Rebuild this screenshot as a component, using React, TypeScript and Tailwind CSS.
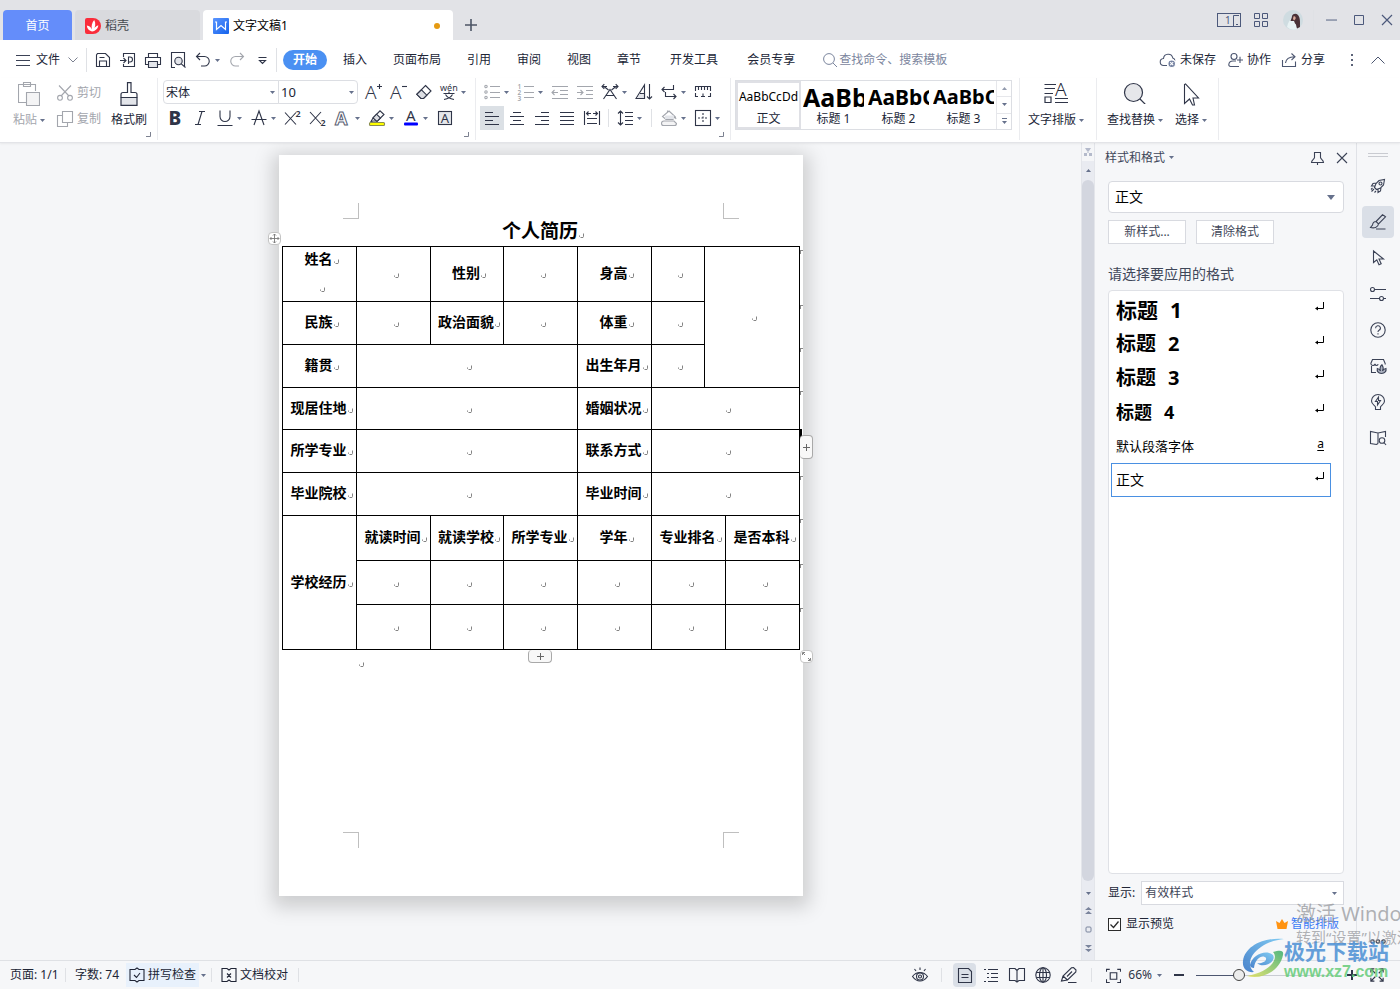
import React, { type ReactNode } from "react";

const inkA = { fontFamily: "Noto Sans", stroke: "none", fill: "currentColor" } as const;

const glyphs: Record<string, ReactNode> = {
  save: <><path d="M1.5 3V14.5H14.5V5.5L10.5 1.5H2.5L1.5 3Z" /><path d="M4.5 14.5V9H11.5V14.5M4.5 5.5H9.5" /></>,
  export: <><path d="M3.5 5V1.5H14.5V14.5H3.5V12M0 8.5H6M3.5 6L6 8.5L3.5 11" /><path d="M8.5 12V5H10a2.4 2.4 0 0 1 0 5H8.5" /></>,
  print: <><path d="M3.5 5.5V1.5H12.5V5.5M3.5 12.5H.5V5.5H15.5V12.5H12.5" /><path d="M3.5 9.5H12.5V15.5H3.5Z" fill="#e3e5ea" /></>,
  preview: <><path d="M5 15.5H1.5V.5H14.5V14" /><circle cx="8.5" cy="9" r="3.7" fill="#e3e5ea" /><path d="M11.3 11.8L15.5 15.5" /></>,
  undo: <path d="M5 1L1.5 4.5L5 8M1.5 4.5H9.5a4.5 4.5 0 0 1 0 9.5H6" />,
  redo: <path d="M11 1L14.5 4.5L11 8M14.5 4.5H6.5a4.5 4.5 0 0 0 0 9.5H10" />,
  more: <path d="M4.500 5.500H12.500M5.500 8.500H11.500L8.500 11.500Z" />,
  cut: <><path d="M2 0.5L12 11M14 .5L4 11" /><circle cx="3" cy="12.8" r="2.4" /><circle cx="13" cy="12.8" r="2.4" /></>,
  copy: <><path d="M5.5.5H15.5V11.5H5.5Z" fill="#fff" /><path d="M5 4.5H.5V15.5H10.5V12" /></>,
  grow: <><text x="-1" y="15" fontSize="19" fontWeight="300" style={inkA}>A</text><path d="M11 2.500H16M13.500 0V5" /></>,
  shrink: <><text x="-1" y="15" fontSize="19" fontWeight="300" style={inkA}>A</text><path d="M11 2.500H16" /></>,
  eraser: <><path d="M9.5 1.5L15 7L7.5 14.5H5L.8 10.3Z" /><path d="M5.5 5.8L10.8 11.2L7.5 14.5H5L.8 10.3Z" fill="#dcdee3" /></>,
  pinyin: <><text x="-1" y="6.500" fontSize="9" style={inkA}>wén</text><path d="M2.500 9.500H13.500M8 7.500V9.500M4.500 10.500C6.500 14 9.500 15 13 15.500M11.500 10.500C9.500 14 6.500 15 3 15.500" /></>,
  bold: <text x="1.5" y="15" fontSize="19" fontWeight="800" style={inkA}>B</text>,
  italic: <path d="M7 1.5H13M3 14.5H9M10 1.5L6 14.5" />,
  underline: <path d="M3 .5V6.5a5 5 0 0 0 10 0V.5M.5 15.5H15.5" />,
  strike: <path d="M3 15L8 1L13 15M.5 9.5H15.5" />,
  sup: <><path d="M0 2.500L11 14.500M11 2.500L0 14.500" /><text x="10.5" y="7" fontSize="9" fontWeight="600" style={inkA}>2</text></>,
  sub: <><path d="M0 2L11 14M11 2L0 14" /><text x="10.5" y="16" fontSize="9" fontWeight="600" style={inkA}>2</text></>,
  effect: <text x="0" y="14.5" fontSize="18" fontWeight="700" style={{ fontFamily: "Noto Sans", fill: "#fff", stroke: "#596073", strokeWidth: 1 }}>A</text>,
  highlight: <><path d="M4 8L11 .8L15 4.5L8.5 11H4.5L2 11.5Z" fill="#fff" /><path d="M4 8L8 11.5L11.5 8L7.5 4.2Z" fill="#dcdee3" /><rect x=".5" y="12.5" width="15" height="3" rx="1" fill="#ffff00" stroke="#8a8d50" /></>,
  color: <><text x="3" y="11" fontSize="15" style={inkA}>A</text><rect x="1" y="12.5" width="14" height="3" rx="1" fill="#0000ff" stroke="none" /></>,
  shade: <><rect x="1.5" y="1.5" width="13" height="13" fill="#e6e8ec" /><text x="3.7" y="12.5" fontSize="13" style={inkA}>A</text></>,
  bullets: <><circle cx="2" cy="2.5" r="1.2" /><circle cx="2" cy="8" r="1.2" /><circle cx="2" cy="13.5" r="1.2" /><path d="M6 2.5H16M6 8.5H16M6 13.5H16" /></>,
  numbers: <><text x="-.5" y="4.5" fontSize="6.5" fontWeight="600" style={inkA}>1</text><text x="-.5" y="10.5" fontSize="6.5" fontWeight="600" style={inkA}>2</text><text x="-.5" y="16.5" fontSize="6.5" fontWeight="600" style={inkA}>3</text><path d="M6 2.5H16M6 8.5H16M6 13.5H16" /></>,
  outdent: <path d="M0 2.5H16M8 6.5H16M8 10.5H16M0 14.5H16M0 8.5H6M2.5 6L0 8.5L2.5 11" />,
  indent: <path d="M0 2.5H16M9 6.5H16M9 10.5H16M0 14.5H16M0 8.5H6M3.5 6L6 8.5L3.5 11" />,
  scale: <path d="M1.500 15L8 5.500L14.500 15M4 11.500H12M6.500 6L2 2.500M9.500 6L14 2.500M0 2.500H5M2.300 .200L0 2.500L2.300 4.800M16 2.500H11M13.700 .200L16 2.500L13.700 4.800" />,
  sort: <><path d="M0 14.5L8.5 1V14.5Z" /><path d="M4 9.5H8.5V14.5H1" fill="#e3e5ea" /><path d="M13.5 0V15M11 12.5L13.5 15L16 12.5" /></>,
  tabs: <path d="M12.5 1V5.5H1M3.5 3L1 5.5L3.5 8M4.5 8V12.5H15M12.5 10L15 12.5L12.5 15" />,
  ruler: <path d="M.5 7V2.5H15.5V7M3.500 3V6M6.500 3V6M9.500 3V6M12.500 3V6M.5 9V12.5H3M6 12.5H10M8 9.5V12.5M13 12.5H15.5V9" />,
  left: <path d="M1 2.5H9M1 6.5H15M1 10.5H9M1 14.5H15" />,
  center: <path d="M4 2.5H12M1 6.5H15M4 10.5H12M1 14.5H15" />,
  right: <path d="M7 2.5H15M1 6.5H15M7 10.5H15M1 14.5H15" />,
  justify: <path d="M1 2.5H15M1 6.5H15M1 10.5H15M1 14.5H15" />,
  distribute: <path d="M.5 1V15M15.5 1V15M3 8.5H13M3 13.5H13M3 3.5H7M9 3.5H13M4.5 1.5L2.5 3.5L4.5 5.5M11.5 1.5L13.5 3.5L11.5 5.5" />,
  spacing: <path d="M3.5 1V15M1 3.5L3.5 1L6 3.5M1 12.5L3.5 15L6 12.5M8 2.5H16M8 6.5H16M8 10.5H16M8 14.5H16" />,
  bucket: <><path d="M8 1L14 6.5L12 9.500H5L1.500 6.5ZM6.500 2.500V.500M14 6.500L15 9" /><path d="M4 5.500H13V9H4Z" fill="#e3e5ea" stroke="none" /><path d="M3 11H13L15.500 13.500Q15.500 15.500 13.500 15.500H2.500Q.500 15.500 .500 13.500Q.500 11 3 11Z" fill="#f4f4f5" /></>,
  borders: <><rect x=".5" y=".5" width="15" height="15" /><path d="M8 3V13M3 8H13" strokeDasharray="2 1.5" /></>,
  cloud: <><path d="M7 13.5H4a3.5 3.5 0 0 1-.5-7A4.7 4.7 0 0 1 12.8 6A3.5 3.5 0 0 1 15 8.5" /><circle cx="11.7" cy="11.7" r="3.8" fill="#7380a0" stroke="#fff" /><path d="M10.2 10.2L13.2 13.2M13.2 10.2L10.2 13.2" stroke="#fff" /></>,
  collab: <><circle cx="6" cy="4.5" r="3" /><path d="M11 14.5H2.5A1.8 1.8 0 0 1 .8 12.5C1 10.5 2.5 9 5 9H8M12 4.8V11M9 8H15" /></>,
  share: <path d="M.5 8V14.5H13.5V9.5M3.5 11C4 7 6.5 5 12.5 4.8M9.5 1.5L13 4.8L9.5 8" />,
  rocket: <><path d="M4.5 9.5L6 5.5L9 2.5L14.5 1.5L13.5 7L10.5 10L6.5 11.5ZM6.5 5L3 5.5L1.5 8H4.5M11 9.5L10.5 13L8 14.5V11M4 11L1.5 13.5M2.5 10L1 11.5M6 13L4.5 14.5" /><circle cx="10.5" cy="5.5" r="1.5" /></>,
  brush: <path d="M14.500 2L12.500 .800L6 7.500L8.500 10L15.500 2.800ZM6 7.500C3.500 7.500 2.800 9 2.500 11L.500 13.500C4 14.500 8 13.500 8.500 10M6 15H15.500" />,
  pointer: <path d="M3.5 1V12.5L6.8 9.8L9 14.8L11.2 13.8L9 9H13.5Z" />,
  sliders: <><circle cx="2.5" cy="3.5" r="2" /><path d="M4.5 3.5H16M0 12.5H9.5M13.5 12.5H16" /><circle cx="11.5" cy="12.5" r="2" /></>,
  help: <><circle cx="8" cy="8" r="7.2" /><path d="M5.6 6.2a2.4 2.4 0 1 1 3.4 2.1C8.2 8.7 8 9 8 10M8 11.3V12.5" /></>,
  store: <><path d="M6 14.5H1.500V8M.800 5.500L2.500 1.500H13.500L15.200 5.500V6.500M.800 5.500C1 8 4.500 8 5 6C5.500 8 8 8 8 6" /><path d="M11.500 15.500C8 15.200 6.800 13 7.300 10.500C9 11 10 12 10.500 13C9.500 10 10.500 8 12 6.800C13.500 9 13.500 11 12.500 13C13 11.500 14.500 10.800 16 10.500C16.500 13 15 15.200 11.500 15.500Z" fill="#aeb4c2" /></>,
  idea: <><path d="M5.5 13C5 11.5 1.5 10.5 1.5 7a6.5 6.5 0 0 1 13 0C14.500 10.500 11 11.500 10.500 13V15.500H5.500Z" /><path d="M8.500 3L5.500 7.500H7.500V11L10.500 6.500H8.500Z" /></>,
  search: <><path d="M8 13.500L6.500 14.500L.500 13.500V1.500L8 3L15.500 1.500V7M8 3V13.500" /><circle cx="12" cy="10.500" r="2.800" /><path d="M14 12.500L16 15" /></>,
  eye: <><path d="M.5 9.500C3 6 5 5.500 8 5.500S13 6 15.500 9.500C13 13 11 14 8 14S3 13 .500 9.500ZM8 .500V3M2.500 2L4 4M13.500 2L12 4" /><circle cx="8" cy="9.500" r="3.500" /><circle cx="8" cy="9.500" r="1.500" /></>,
  page: <path d="M1.500 1.500H11.500L14.500 4.500V15.500H1.500ZM4.500 7.500H11.500M4.500 10.500H11.500" />,
  outline: <path d="M1 2.500H3M5 2.500H15M4 6.500H6M8 6.500H15M4 10.500H6M8 10.500H15M1 14.500H3M5 14.500H15" />,
  book: <path d="M8 3.500L6 1.500H.500V13.500H6L8 15L10 13.500H15.500V1.500H10ZM8 3.500V14" />,
  globe: <><circle cx="8" cy="8" r="7.200" /><ellipse cx="8" cy="8" rx="3.500" ry="7.200" /><path d="M8 .500V15.500M1.500 5.500H14.500M1.500 10.500H14.500" /></>,
  pencil: <path d="M.500 14L2 9L10.500 .800L12.500 .500L15 3L14.800 5L6.500 13ZM2 9L6.500 13M11 4.500L6 9.500M7 15.500H15.500" />,
  focus: <path d="M.5 4V1.500H4M12 1.500H15.500V4M15.500 12V15.500H12M4 15.500H.500V12M4.500 5H11.500V12H4.500Z" />,
  full: <path d="M1 5V1H5M11 1H15V5M15 11V15H11M5 15H1V11M1 1L6 6M15 1L10 6M15 15L10 10M1 15L6 10" />,
  check: <path d="M1 2.500H6L8 1L10 2.500H15V13.500H10L8 15L6 13.500H1ZM5 8L7.500 10.500L11 6" />,
  proof: <path d="M1 1.500H6L8 3L10 1.500H15V14.500H10L8 13L6 14.500H1ZM6 6.500L10 10.500M10 6.500L6 10.500" />,
  close: <path d="M3 3L13 13M13 3L3 13" />,
  pin: <path d="M4.500 2.500H10.500V7.500C10.500 9 13.500 10 13.500 12.500H1.500C1.500 10 4.500 9 4.500 7.500ZM7.500 12.500V15" />,
};

function Icon({ name, className = "" }: { name: string; className?: string }) {
  return (
    <svg viewBox="0 0 16 16" className={`size-4 shrink-0 overflow-visible ${className}`} fill="none" stroke="currentColor" strokeWidth="1.1" aria-hidden="true">
      {glyphs[name]}
    </svg>
  );
}

function Caret({ className = "" }: { className?: string }) {
  return (
    <svg viewBox="0 0 5 3" className={`h-[3px] w-[5px] shrink-0 text-[#66718c] ${className}`} aria-hidden="true">
      <path d="M0 0H5L2.5 3Z" fill="currentColor" />
    </svg>
  );
}

function Tool({ name, label, caret, dim, active }: { name: string; label: string; caret?: boolean; dim?: boolean; active?: boolean }) {
  return (
    <button type="button" aria-label={label} className={`flex h-6 items-center gap-1 ${dim ? "text-[#a3a6ad]" : "text-[#2f3548]"} ${active ? "-mx-1 bg-[#dbe0e5] px-1" : ""}`}>
      <Icon name={name} />
      {caret && <Caret />}
    </button>
  );
}

const Rule = ({ className = "h-5" }: { className?: string }) => <span className={`w-px shrink-0 bg-[#dfe1e5] ${className}`} />;
const GroupRule = () => <span className="h-[62px] w-px shrink-0 bg-[#ebecef]" />;

function Corner() {
  return (
    <svg viewBox="0 0 5 5" className="absolute right-[6px] bottom-[5px] size-[5px]" aria-hidden="true">
      <path d="M4.500 0V4.500H0" fill="none" stroke="#7c8190" />
    </svg>
  );
}

function TitleBar() {
  return (
    <header className="flex h-10 items-end bg-[#e2e3e7] pl-[3px]">
      <button type="button" className="h-[30px] w-[69px] rounded-t bg-[#648dfa] pt-0.5 text-white">首页</button>
      <button type="button" className="ml-[3px] flex h-[30px] w-[125px] items-center gap-1 rounded-t bg-[#d9dade] pt-0.5 pl-[10px] text-[#45494f]">
        <svg viewBox="0 0 16 16" className="size-4">
          <path d="M0 2Q0 0 2 0H8A8 8 0 0 1 8 16H2Q0 16 0 14Z" fill="#fa2d3b" />
          <path d="M7 13.500C3.500 12.500 2 10.500 1.800 7.500C4.500 8 6 9.300 7 11.500C6 8 7 4.500 9.200 2C11 5.500 10.500 9 8.200 12C9.500 9.500 11 8 13.300 7.300C13 10.500 11 13 7 13.500Z" fill="#fff" />
        </svg>
        稻壳
      </button>
      <button type="button" className="ml-[3px] flex h-[30px] w-[250px] items-center gap-1 rounded-t bg-white px-[10px] pt-0.5 text-black">
        <svg viewBox="0 0 16 16" className="size-4">
          <defs><linearGradient id="w" x2="1" y2="1"><stop stopColor="#5c96ff" /><stop offset="1" stopColor="#1463ec" /></linearGradient></defs>
          <rect width="16" height="16" rx="1" fill="url(#w)" />
          <path d="M2 4H3.500V11.500L8 7.500L12.500 11.500V4H14" fill="none" stroke="#fff" strokeWidth="1.200" />
        </svg>
        文字文稿1
        <span className="mr-[3px] ml-auto size-1.5 rounded-full bg-[#e59a12]" />
      </button>
      <button type="button" aria-label="新建" className="ml-3 flex h-[30px] items-center text-[#4d5566]">
        <svg viewBox="0 0 12 12" className="size-3" stroke="currentColor" strokeWidth="1.600"><path d="M0 6H12M6 0V12" /></svg>
      </button>
      <div className="ml-auto flex h-10 items-center pr-[7px] text-[#4c597b]">
        <svg viewBox="0 0 24 14" className="h-[14px] w-6" fill="none" stroke="currentColor">
          <rect x=".5" y=".5" width="23" height="13" />
          <path d="M22 2.500H16.500V13" /><path d="M19 11.500H21" />
          <text x="8" y="11" fontSize="10" style={inkA}>1</text>
        </svg>
        <svg viewBox="0 0 14 14" className="ml-[13px] size-[14px]" fill="none" stroke="currentColor">
          <path d="M.5.5H5.500V5.500H.5ZM8.500.5H13.500V5.500H8.500ZM.5 8.500H5.500V13.500H.5ZM8.500 8.500H13.500V13.500H8.500Z" />
        </svg>
        <svg viewBox="0 0 20 20" className="ml-[15px] size-5">
          <circle cx="10" cy="10" r="10" fill="#cfdce1" />
          <path d="M4 17C5 12 7 9 10 8L13 12L14 19Q8 21 4 17Z" fill="#e8f2f4" />
          <path d="M9 6C10 3.500 13 3 15 5C17.500 8 17 13 17 17L14 18.500C13 16 13.500 14 12 13.500L11 11L7.500 11C8 9 9 8 9 6Z" fill="#4a3238" />
          <path d="M10.500 6.500C12 6 13 7 12.500 9L11 10.500L10 9Z" fill="#dcae9e" />
        </svg>
        <Rule className="ml-[10px] h-5 bg-[#c9cbd1]" />
        <svg viewBox="0 0 12 12" className="ml-3 size-[11px]" stroke="currentColor"><path d="M0 5.500H12" /></svg>
        <svg viewBox="0 0 10 10" className="ml-[17px] size-[10px]" fill="none" stroke="currentColor"><path d="M.5.5H9.500V9.500H.5Z" /></svg>
        <svg viewBox="0 0 12 12" className="ml-[17px] size-3" stroke="currentColor" strokeWidth="1.200"><path d="M1 1L11 11M11 1L1 11" /></svg>
      </div>
    </header>
  );
}

function MenuBar() {
  return (
    <nav className="flex h-[38px] items-center bg-white pt-0.5 pl-4 text-[#202536]">
      <button type="button" className="flex items-center gap-1.5">
        <svg viewBox="0 0 14 11" className="h-[11px] w-[14px]" stroke="#3b4256"><path d="M0 .500H14M0 5.500H14M0 10.500H14" /></svg>
        文件
        <svg viewBox="0 0 10 6" className="ml-0.5 h-1.5 w-[10px]" fill="none" stroke="#7c8190"><path d="M.5.500L5 5L9.500.500" /></svg>
      </button>
      <Rule className="mr-2 ml-2 h-6" />
      <div className="flex gap-[9px]">
        <Tool name="save" label="保存" />
        <Tool name="export" label="输出" />
        <Tool name="print" label="打印" />
        <Tool name="preview" label="打印预览" />
        <Tool name="undo" label="撤销" caret />
        <Tool name="redo" label="恢复" dim />
        <Tool name="more" label="更多" />
      </div>
      <Rule className="mr-1.5 ml-1.5 h-6" />
      <button type="button" className="h-5 w-11 rounded-full bg-[#4a90f2] font-bold text-white">开始</button>
      <div className="ml-4 flex gap-[26px]">
        {["插入", "页面布局", "引用", "审阅", "视图", "章节"].map((t) => <button type="button" key={t}>{t}</button>)}
      </div>
      <div className="ml-[29px] flex gap-[29px]">
        <button type="button">开发工具</button>
        <button type="button">会员专享</button>
      </div>
      <label className="ml-7 flex items-center gap-0.5 text-[#7b859d]">
        <svg viewBox="0 0 14 14" className="size-[14px]" fill="none" stroke="currentColor"><circle cx="6" cy="6" r="5.400" /><path d="M10 10L14 14" /></svg>
        <input aria-label="查找命令" placeholder="查找命令、搜索模板" className="w-32 bg-transparent outline-none placeholder:text-[#7b859d]" />
      </label>
      <div className="ml-auto flex items-center pr-[15px]">
        <button type="button" className="flex items-center gap-1"><Icon name="cloud" className="text-[#4c5670]" />未保存</button>
        <button type="button" className="ml-3 flex items-center gap-[3px]"><Icon name="collab" className="text-[#4c5670]" />协作</button>
        <button type="button" className="ml-[11px] flex items-center gap-[3px]"><Icon name="share" className="text-[#4c5670]" />分享</button>
        <Rule className="ml-[9px]" />
        <svg viewBox="0 0 2 12" className="ml-4 h-3 w-0.5" fill="#5b6378"><path d="M0 0H2V2H0ZM0 5H2V7H0ZM0 10H2V12H0Z" /></svg>
        <svg viewBox="0 0 14 8" className="ml-[18px] h-2 w-[14px]" fill="none" stroke="#4c5670"><path d="M.5 7.500L7 1L13.500 7.500" /></svg>
      </div>
    </nav>
  );
}

function Ribbon() {
  const label = "flex h-6 items-center gap-[3px] pt-1";
  return (
    <section className="relative z-10 flex h-[65px] border-b border-[#e3e4e8] bg-white text-[#202536] shadow-[0_1px_2px_rgba(0,0,0,0.06)]">
      <div className="relative flex w-[157px] pt-[2px] pl-[13px]">
        <button type="button" className="flex flex-col items-center gap-[2px] text-[#a3a6ad]">
          <svg viewBox="0 0 22 24" className="mt-0.5 h-6 w-[22px]" fill="none" stroke="currentColor" strokeWidth="1.100">
            <path d="M8 20.500H.5V2.500H17.500V9M5.500.500H12.500V4.500H5.500Z" /><path d="M8.500 10.500H21.500V23.500H8.500Z" fill="#f4f4f5" />
          </svg>
          <span className={`-mt-0.5 ${label}`}>粘贴<Caret /></span>
        </button>
        <div className="ml-3 flex flex-col gap-[2px] text-[#a3a6ad]">
          <button type="button" className="flex h-6 items-center gap-1 pt-0.5"><Icon name="cut" />剪切</button>
          <button type="button" className="flex h-6 items-center gap-1 pt-0.5"><Icon name="copy" />复制</button>
        </div>
        <button type="button" className="ml-[10px] flex flex-col items-center gap-[2px]">
          <svg viewBox="0 0 18 24" className="mt-0.5 h-6 w-[18px]" fill="none" stroke="#2f3548" strokeWidth="1.200">
            <path d="M1 15.500H17V23.400H1Z" fill="#e3e5ea" /><path d="M1 15.500V12.500Q1 10.500 3 10.500H7.500V.600H11V10.500H15Q17 10.500 17 12.500V15.500" />
          </svg>
          <span className={`-mt-0.5 ${label}`}>格式刷</span>
        </button>
        <Corner />
      </div>
      <GroupRule />
      <div className="relative flex w-[317px] flex-col gap-[2px] pt-[2px] pl-[5px]">
        <div className="flex h-6 items-center">
          <label className="grid h-6 w-[116px] items-center rounded-l border border-[#dcdee3]">
            <select aria-label="字体" className="appearance-none bg-transparent px-0.5 pt-0.5 outline-none [grid-area:1/1]"><option>宋体</option></select>
            <Caret className="pointer-events-none mr-[3px] justify-self-end [grid-area:1/1]" />
          </label>
          <label className="-ml-px grid h-6 w-20 items-center rounded-r border border-[#dcdee3]">
            <select aria-label="字号" className="appearance-none bg-transparent px-0.5 text-[13px] outline-none [grid-area:1/1]"><option>10</option></select>
            <Caret className="pointer-events-none mr-[3px] justify-self-end [grid-area:1/1]" />
          </label>
          <div className="ml-2 flex gap-[9px]">
            <Tool name="grow" label="增大字号" />
            <Tool name="shrink" label="减小字号" />
            <Tool name="eraser" label="清除格式" />
            <Tool name="pinyin" label="拼音指南" caret />
          </div>
        </div>
        <div className="ml-1 flex gap-[9px]">
          <Tool name="bold" label="加粗" />
          <Tool name="italic" label="倾斜" />
          <Tool name="underline" label="下划线" caret />
          <Tool name="strike" label="删除线" caret />
          <Tool name="sup" label="上标" />
          <Tool name="sub" label="下标" />
          <Tool name="effect" label="文字效果" caret />
          <Tool name="highlight" label="突出显示" caret />
          <Tool name="color" label="字体颜色" caret />
          <Tool name="shade" label="字符底纹" />
        </div>
        <Corner />
      </div>
      <GroupRule />
      <div className="relative flex w-[254px] flex-col gap-[2px] pt-[2px] pl-2">
        <div className="flex gap-[9px]">
          <Tool name="bullets" label="项目符号" caret dim />
          <Tool name="numbers" label="编号" caret dim />
          <Tool name="outdent" label="减少缩进" dim />
          <Tool name="indent" label="增加缩进" dim />
          <Tool name="scale" label="中文版式" caret />
          <Tool name="sort" label="排序" />
          <Tool name="tabs" label="显示标记" caret />
          <Tool name="ruler" label="制表位" />
        </div>
        <div className="flex items-center gap-[9px]">
          <Tool name="left" label="左对齐" active />
          <Tool name="center" label="居中" />
          <Tool name="right" label="右对齐" />
          <Tool name="justify" label="两端对齐" />
          <Tool name="distribute" label="分散对齐" />
          <Rule className="-mx-px h-[18px]" />
          <Tool name="spacing" label="行距" caret />
          <Rule className="h-[18px]" />
          <Tool name="bucket" label="底纹颜色" caret dim />
          <Tool name="borders" label="边框" caret />
        </div>
        <Corner />
      </div>
      <GroupRule />
      <div className="mt-[2px] ml-1 flex h-[50px] w-[277px] border border-[#dcdee3]">
        {[
          ["正文", "text-[12px] font-normal", "border-2 border-[#dfe0e5]"],
          ["标题 1", "text-[25px] font-bold", "border-2 border-transparent"],
          ["标题 2", "text-[21px] font-bold", "border-2 border-transparent"],
          ["标题 3", "text-[20px] font-bold", "border-2 border-transparent"],
        ].map(([t, size, edge]) => (
          <button type="button" key={t} className={`flex w-[65px] flex-col overflow-hidden ${edge}`}>
            <span className={`flex h-[29px] items-center text-black ${size} ${t === "正文" ? "self-center" : ""}`}>AaBbCcDd</span>
            <span className="self-center leading-4">{t}</span>
          </button>
        ))}
        <div className="flex flex-1 flex-col border-l border-[#e6e7eb]">
          <button type="button" aria-label="上一行" className="flex flex-1 items-center justify-center"><Caret className="rotate-180 opacity-70" /></button>
          <button type="button" aria-label="下一行" className="flex flex-1 items-center justify-center border-y border-[#e6e7eb]"><Caret /></button>
          <button type="button" aria-label="更多样式" className="flex flex-1 flex-col items-center justify-center gap-0.5"><span className="h-px w-[5px] bg-[#66718c]" /><Caret /></button>
        </div>
      </div>
      <span className="w-[7px]" />
      <GroupRule />
      <button type="button" className="ml-2 flex w-[56px] flex-col items-center gap-[2px] pt-[2px]">
        <svg viewBox="0 0 24 24" className="h-6 w-6" fill="none" stroke="#2f3548" strokeWidth="1.200">
          <path d="M.5 4.500H12M.5 8.500H11M.5 13.500H9M11 22.500H24M11 18.500H24M1 17H7V22.500H1Z" />
          <text x="11" y="16" fontSize="19" fontWeight="300" style={inkA}>A</text>
        </svg>
        <span className={label}>文字排版<Caret /></span>
      </button>
      <span className="w-[12px]" />
      <GroupRule />
      <button type="button" className="ml-[10px] flex w-[56px] flex-col items-center gap-[2px] pt-[2px]">
        <svg viewBox="0 0 24 24" className="size-6" fill="none" stroke="#2f3548" strokeWidth="1.200"><circle cx="10.500" cy="12.500" r="9" fill="#e6e7ea" /><path d="M17 19L22.500 24.500" /></svg>
        <span className={label}>查找替换<Caret /></span>
      </button>
      <button type="button" className="ml-3 flex w-8 flex-col items-center gap-[2px] pt-[2px]">
        <svg viewBox="0 0 18 24" className="h-6 w-[18px] overflow-visible" fill="none" stroke="#2f3548" strokeWidth="1.100"><path d="M2.500 4.500V23.500L7.500 19L10.500 25H12.500L11 18H16.500L3.500 4Z" /></svg>
        <span className={label}>选择<Caret /></span>
      </button>
      <span className="w-[11px]" />
      <GroupRule />
    </section>
  );
}

function Mark() {
  return (
    <span className="inline-block w-0 align-baseline">
      <svg viewBox="0 0 5 5" className="relative size-[5px] max-w-none translate-x-px" aria-hidden="true">
        <path d="M4.500 .500V3.500L4 4.500H2M.500 2.500V3.500L1.500 4.500" fill="none" stroke="#777" strokeWidth=".9" />
      </svg>
    </span>
  );
}

function Cell({ text = "", cols = 1, rows = 1 }: { text?: string; cols?: number; rows?: number }) {
  return (
    <td colSpan={cols} rowSpan={rows} className="border border-black p-0 pr-0.5 pb-0.5 text-center align-middle leading-4 whitespace-nowrap">
      {text}<Mark />
    </td>
  );
}

function CropMarks({ flip }: { flip?: boolean }) {
  const edge = flip ? "border-t" : "border-b";
  return (
    <div className="flex justify-between px-16">
      <span className={`size-4 border-r border-[#bfbfbf] ${edge}`} />
      <span className={`size-4 border-l border-[#bfbfbf] ${edge}`} />
    </div>
  );
}

function Paper() {
  const rowEnds = ["h-[55px]", "h-[43px]", "h-[43px]", "h-[42px]", "h-[43px]", "h-[43px]", "h-[45px]", "h-[44px]", "h-[45px]"];
  return (
    <article className="flex min-h-[741px] w-[524px] shrink-0 flex-col bg-white py-12 text-black shadow-[0_5px_18px_6px_rgba(0,0,0,0.17)]">
      <CropMarks />
      <h1 className="pr-0.5 pb-0.5 text-center text-[19px] leading-[25px] font-bold">个人简历<Mark /></h1>
      <div className="relative ml-[3px] w-[518px]">
        <table className="w-[518px] table-fixed border-collapse text-[14px] font-bold">
          <colgroup>
            <col className="w-[74px]" /><col className="w-[74px]" /><col className="w-[73px]" /><col className="w-[74px]" />
            <col className="w-[74px]" /><col className="w-[53px]" /><col className="w-[21px]" /><col className="w-[74px]" />
          </colgroup>
          <tbody>
            <tr className="h-[55px]">
              <td className="border border-black p-0 pr-0.5 text-center align-top">
                <p className="leading-[23px]">姓名<Mark /></p>
                <p className="pt-1 leading-[26px]"><Mark /></p>
              </td>
              <Cell /><Cell text="性别" /><Cell /><Cell text="身高" /><Cell /><Cell cols={2} rows={3} />
            </tr>
            <tr className="h-[43px]"><Cell text="民族" /><Cell /><Cell text="政治面貌" /><Cell /><Cell text="体重" /><Cell /></tr>
            <tr className="h-[43px]"><Cell text="籍贯" /><Cell cols={3} /><Cell text="出生年月" /><Cell /></tr>
            <tr className="h-[42px]"><Cell text="现居住地" /><Cell cols={3} /><Cell text="婚姻状况" /><Cell cols={3} /></tr>
            <tr className="h-[43px]"><Cell text="所学专业" /><Cell cols={3} /><Cell text="联系方式" /><Cell cols={3} /></tr>
            <tr className="h-[43px]"><Cell text="毕业院校" /><Cell cols={3} /><Cell text="毕业时间" /><Cell cols={3} /></tr>
            <tr className="h-[45px]">
              <Cell text="学校经历" rows={3} /><Cell text="就读时间" /><Cell text="就读学校" /><Cell text="所学专业" /><Cell text="学年" /><Cell text="专业排名" cols={2} /><Cell text="是否本科" />
            </tr>
            <tr className="h-[44px]"><Cell /><Cell /><Cell /><Cell /><Cell cols={2} /><Cell /></tr>
            <tr className="h-[45px]"><Cell /><Cell /><Cell /><Cell /><Cell cols={2} /><Cell /></tr>
          </tbody>
        </table>
        <div className="absolute top-0 left-full flex w-[3px] flex-col">
          {rowEnds.map((h, i) => (
            <span key={i} className={`pt-1 ${h}`}><span className={`block ${i === 4 ? "-mt-1 h-[11px] w-0.5 bg-black" : "h-1 w-[3px] border-t border-l border-[#888]"}`} /></span>
          ))}
        </div>
        <button type="button" aria-label="移动表格" className="absolute -top-[14px] -left-[14px] flex size-[13px] items-center justify-center rounded-sm border border-[#c4c4c4] bg-white text-[#777]">
          <svg viewBox="0 0 11 11" className="size-[11px]" fill="none" stroke="currentColor" strokeWidth=".9"><path d="M5.500 1V10M1 5.500H10M4 2.500L5.500 1L7 2.500M4 8.500L5.500 10L7 8.500M2.500 4L1 5.500L2.500 7M8.500 4L10 5.500L8.500 7" /></svg>
        </button>
        <button type="button" aria-label="添加列" className="absolute top-[189px] left-[518px] flex h-6 w-[13px] items-center justify-center rounded-sm border border-l-0 border-[#a9a9a9] bg-[#f8f8f8]">
          <svg viewBox="0 0 7 7" className="size-[7px]" stroke="#666"><path d="M0 3.500H7M3.500 0V7" /></svg>
        </button>
        <button type="button" aria-label="添加行" className="absolute top-full left-[246px] flex h-[13px] w-6 items-center justify-center rounded-sm border border-t-0 border-[#a9a9a9] bg-[#f8f8f8]">
          <svg viewBox="0 0 7 7" className="size-[7px]" stroke="#666"><path d="M0 3.500H7M3.500 0V7" /></svg>
        </button>
        <button type="button" aria-label="缩放表格" className="absolute top-full left-full flex size-[13px] items-center justify-center rounded-sm border border-[#c4c4c4] bg-white">
          <svg viewBox="0 0 9 9" className="size-[9px]" fill="none" stroke="#777" strokeWidth=".9"><path d="M.5 3V.500H3M6 8.500H8.500V6M1 1L3 3M8 8L6 6" /></svg>
        </button>
      </div>
      <p className="pl-[79px] text-[14px] leading-6"><Mark /></p>
      <div className="mt-auto"><CropMarks flip /></div>
    </article>
  );
}

function ScrollBar() {
  return (
    <div className="flex w-[14px] shrink-0 flex-col items-center border-x border-[#e3e5ea] bg-[#e9ebf1] text-[#7b859d]">
      <div className="flex h-[18px] w-full items-center justify-center bg-[#f5f6f8]">
        <svg viewBox="0 0 8 8" className="size-2" fill="#b4bacb"><path d="M1 0H7L5 3H3ZM3.500 3H4.500V5H3.500ZM0 5H3V8H0ZM5 5H8V8H5Z" /></svg>
      </div>
      <Caret className="my-2 rotate-180" />
      <div className="w-3 flex-1 rounded-full bg-[#d3d6df]" />
      <Caret className="mt-[11px]" />
      <svg viewBox="0 0 7 7" className="mt-3 size-[7px]" fill="currentColor"><path d="M0 3L3.500 0L7 3ZM0 7L3.500 4L7 7Z" /></svg>
      <svg viewBox="0 0 7 7" className="mt-[12px] size-[7px]" fill="none" stroke="currentColor"><rect x="1" y="1" width="5" height="5" rx="1" /></svg>
      <svg viewBox="0 0 7 7" className="mt-3 mb-2 size-[7px]" fill="currentColor"><path d="M0 0H7L3.500 3ZM0 4H7L3.500 7Z" /></svg>
    </div>
  );
}

function ReturnGlyph() {
  return (
    <svg viewBox="0 0 10 9" className="mb-2 h-[9px] w-[10px]" fill="none" stroke="#000" aria-hidden="true">
      <path d="M8.500 0V6.500H1.500" /><path d="M0 6.500L3 4.500V8.500Z" fill="#000" stroke="none" />
    </svg>
  );
}

function StylePanel() {
  const styles = [
    ["标题 1", "text-[21px] font-bold"],
    ["标题 2", "text-[20px] font-bold"],
    ["标题 3", "text-[20px] font-bold"],
    ["标题 4", "text-[18px] font-bold"],
    ["默认段落字体", "text-[13px]"],
    ["正文", "text-[14px]"],
  ];
  return (
    <aside className="flex w-[262px] shrink-0 flex-col border-r border-[#e0e2e7] bg-[#f6f7f9] pr-3 pl-[13px] text-[#3f4759]">
      <div className="-ml-[3px] flex h-[29px] items-center">
        <button type="button" className="flex items-center gap-1">样式和格式<Caret /></button>
        <Icon name="pin" className="ml-auto text-[#3b4256]" />
        <button type="button" aria-label="关闭" className="-mr-1.5 ml-2 text-[#3b4256]"><Icon name="close" /></button>
      </div>
      <label className="mt-[9px] grid h-8 items-center rounded-sm border border-[#d8dae0] bg-white">
        <select aria-label="当前样式" className="appearance-none bg-transparent px-1.5 text-[14px] text-black outline-none [grid-area:1/1]"><option>正文</option></select>
        <svg viewBox="0 0 8 5" className="pointer-events-none mr-2 h-[5px] w-2 justify-self-end [grid-area:1/1]"><path d="M0 0H8L4 5Z" fill="#66718c" /></svg>
      </label>
      <div className="mt-[7px] flex gap-[10px]">
        <button type="button" className="h-6 w-[78px] border border-[#d8dae0] bg-white">新样式...</button>
        <button type="button" className="h-6 w-[78px] border border-[#d8dae0] bg-white">清除格式</button>
      </div>
      <h2 className="mt-5 text-[14px] leading-5">请选择要应用的格式</h2>
      <ul className="mt-1.5 flex-1 rounded-sm border border-[#dfe1e6] bg-white pt-[2px] pr-3 pl-0.5 text-black">
        {styles.map(([name, size], i) => (
          <li key={name}>
            <button type="button" className={`flex h-[34px] w-full items-center justify-between border pr-[5px] pl-1 ${i === 5 ? "border-[#4a90e2]" : "border-transparent"}`}>
              <span className={`${size} ${i < 4 ? "leading-7" : ""}`}>{i < 4 ? <>{name.slice(0, 2)}<span className="pl-3">{name.slice(3)}</span></> : name}</span>
              {i === 4 ? <span className="mr-px mb-1 text-[12px] underline underline-offset-2">a</span> : <ReturnGlyph />}
            </button>
          </li>
        ))}
      </ul>
      <div className="mt-[7px] flex h-6 items-center gap-1.5">
        <label htmlFor="scope" className="text-[#202536]">显示:</label>
        <div className="grid h-6 flex-1 items-center border border-[#d8dae0] bg-white">
          <select id="scope" className="appearance-none bg-transparent px-[3px] outline-none [grid-area:1/1]"><option>有效样式</option></select>
          <Caret className="pointer-events-none mr-1.5 justify-self-end [grid-area:1/1]" />
        </div>
      </div>
      <div className="mt-[7px] mb-6 flex h-6 items-center">
        <label className="flex items-center gap-[5px] text-[#202536]">
          <span className="grid size-[13px]">
            <input type="checkbox" defaultChecked className="peer size-[13px] appearance-none border border-[#2b2b2b] bg-white [grid-area:1/1]" />
            <svg viewBox="0 0 13 13" className="pointer-events-none hidden size-[13px] peer-checked:block [grid-area:1/1]" fill="none" stroke="#2b2b2b" strokeWidth="1.300"><path d="M2.500 6.500L5.500 9.500L10.500 3.500" /></svg>
          </span>
          显示预览
        </label>
        <a href="#layout" className="mr-[5px] ml-auto flex items-center gap-[3px] text-[#3d7bf5]">
          <svg viewBox="0 0 12 10" className="h-[10px] w-3" fill="#ff9312"><path d="M0 2L3.500 4L6 0L8.500 4L12 2L10.500 10H1.500Z" /></svg>
          智能排版
        </a>
      </div>
    </aside>
  );
}

function SideRail() {
  const items = [["rocket", "助手"], ["brush", "样式"], ["pointer", "选择"], ["sliders", "设置"], ["help", "帮助"], ["store", "稻壳"], ["idea", "技巧"], ["search", "查阅"]];
  return (
    <aside className="flex w-[43px] shrink-0 flex-col items-center bg-[#f6f7f9] pt-[10px] pr-0.5 text-[#3b4256]">
      <span className="mb-[13px] h-1 w-5 border-y border-[#c9cbd1]" />
      <div className="flex flex-col gap-1">
        {items.map(([name, label], i) => (
          <button type="button" key={name} aria-label={label} className={`flex size-8 items-center justify-center rounded-sm ${i === 1 ? "bg-[#dadfe7]" : ""}`}><Icon name={name} /></button>
        ))}
      </div>
      <svg viewBox="0 0 16 5" className="mt-auto mb-4 h-[5px] w-4" fill="none" stroke="#3b4256" strokeWidth="1.200"><circle cx="2.500" cy="2.500" r="1.700" /><circle cx="8" cy="2.500" r="1.700" /><circle cx="13.500" cy="2.500" r="1.700" /></svg>
    </aside>
  );
}

function StatusBar() {
  return (
    <footer className="flex h-[29px] items-center border-t border-[#dfe1e5] bg-[#f6f7f9] pr-4 pl-[10px] text-[#202536]">
      <span className="w-[55px]">页面: 1/1</span>
      <Rule className="mr-[9px] h-[14px]" />
      <span className="w-[51px]">字数: 74</span>
      <button type="button" className="flex h-6 w-[73px] items-center gap-[3px] bg-[#e8f1fc] pl-[3px]"><Icon name="check" />拼写检查</button>
      <Caret className="ml-[2px]" />
      <Rule className="mx-[5px] h-[14px]" />
      <button type="button" className="ml-1 flex items-center gap-[3px]"><Icon name="proof" />文档校对</button>
      <Rule className="ml-[10px] h-[14px]" />
      <div className="ml-auto flex items-center text-[#2f3548]">
        <Icon name="eye" />
        <Rule className="mr-[11px] ml-[13px] h-[14px]" />
        <div className="flex items-center gap-[3px]">
          {["page", "outline", "book", "globe", "pencil"].map((n, i) => (
            <button type="button" key={n} aria-label={n} className={`flex h-6 w-[23px] items-center justify-center ${i === 0 ? "rounded-sm bg-[#dadfe7]" : ""}`}><Icon name={n} /></button>
          ))}
        </div>
        <Rule className="mr-[14px] ml-[11px] h-[14px]" />
        <svg viewBox="0 0 16 16" className="size-[15px]" fill="none" stroke="currentColor" strokeWidth="1.200">{glyphs.focus}</svg>
        <button type="button" className="ml-[7px] flex items-center gap-[5px]">66%<Caret /></button>
        <svg viewBox="0 0 10 2" className="ml-3 h-0.5 w-[10px]" fill="currentColor"><path d="M0 0H10V2H0Z" /></svg>
        <input
          type="range"
          aria-label="缩放"
          min={0}
          max={100}
          defaultValue={29}
          className="mx-3 h-3 w-[139px] appearance-none bg-[linear-gradient(to_right,#4c5670_31%,#c9ccd3_31%)] bg-[length:100%_1px] bg-center bg-no-repeat [&::-webkit-slider-thumb]:size-3 [&::-webkit-slider-thumb]:appearance-none [&::-webkit-slider-thumb]:rounded-full [&::-webkit-slider-thumb]:border [&::-webkit-slider-thumb]:border-[#444] [&::-webkit-slider-thumb]:bg-[#ececec]"
        />
        <svg viewBox="0 0 10 10" className="size-[10px]" stroke="currentColor" strokeWidth="2"><path d="M0 5H10M5 0V10" /></svg>
        <svg viewBox="0 0 16 16" className="ml-[13px] size-[14px]" fill="none" stroke="currentColor" strokeWidth="1.300">{glyphs.full}</svg>
      </div>
    </footer>
  );
}

function Watermarks() {
  return (
    <>
      <div className="pointer-events-none absolute right-0 bottom-[41px] z-20 w-[104px] overflow-hidden whitespace-nowrap text-[#8f9196]/70">
        <p className="text-[20px] leading-[26px]">激活 Windows</p>
        <p className="text-[15px] leading-[21px]">转到“设置”以激活 Windows。</p>
      </div>
      <div className="pointer-events-none absolute right-[11px] bottom-[7px] z-30 flex items-center font-bold opacity-85">
        <svg viewBox="0 0 42 40" className="mb-1 h-10 w-[42px]">
          <defs>
            <linearGradient id="blue" x1="0" y1="1" x2="1" y2="0"><stop stopColor="#2c6fc4" /><stop offset="1" stopColor="#6cc4f2" /></linearGradient>
            <linearGradient id="green" x1="0" y1="1" x2="1" y2="0"><stop stopColor="#e3e05a" /><stop offset="1" stopColor="#38ad6b" /></linearGradient>
          </defs>
          <path d="M42 1C22-1 3 8 1 23C0 31 6 35 12 34C5 28 7 17 19 9C26 4 34 2 42 1Z" fill="url(#blue)" />
          <path d="M5 38C20 42 38 33 41 17C42 12 38 12 31 14C37 20 29 34 5 38Z" fill="url(#green)" />
          <path d="M8 27C10 17 24 11 31 17C35 24 21 31 15 25C18 26 25 24 24 20C21 16 13 20 12 30C10 30 8 29 8 27Z" fill="url(#blue)" />
        </svg>
        <div>
          <p className="text-[21px] leading-[23px] text-[#4b8fd4]">极光下载站</p>
          <p className="font-['Liberation_Sans'] text-[16px] leading-[18px] text-[#66cc7a]">www.xz7.com</p>
        </div>
      </div>
    </>
  );
}

export default function App() {
  return (
    <div className="relative flex min-h-screen flex-col overflow-hidden bg-[#f5f6f8] font-['Noto_Sans','Noto_Sans_CJK_SC',sans-serif] text-[12px] leading-4 whitespace-nowrap">
      <TitleBar />
      <MenuBar />
      <Ribbon />
      <div className="flex flex-1">
        <main className="flex min-w-0 flex-1 items-start justify-center pt-3 pb-8 pl-px"><Paper /></main>
        <ScrollBar />
        <StylePanel />
        <SideRail />
      </div>
      <StatusBar />
      <Watermarks />
    </div>
  );
}
